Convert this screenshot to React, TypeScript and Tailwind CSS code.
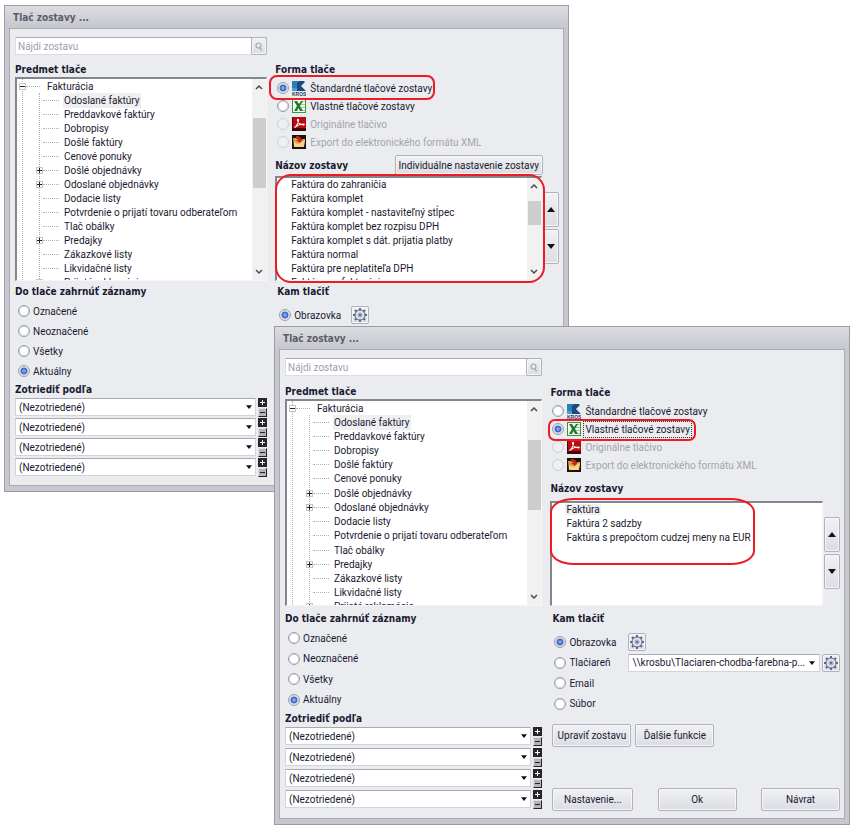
import React, { ReactNode } from 'react';
import clsx from 'clsx';

const TREE = [
  { label: 'Odoslané faktúry', active: true },
  { label: 'Preddavkové faktúry' },
  { label: 'Dobropisy' },
  { label: 'Došlé faktúry' },
  { label: 'Cenové ponuky' },
  { label: 'Došlé objednávky', expandable: true },
  { label: 'Odoslané objednávky', expandable: true },
  { label: 'Dodacie listy' },
  { label: 'Potvrdenie o prijatí tovaru odberateľom' },
  { label: 'Tlač obálky' },
  { label: 'Predajky', expandable: true },
  { label: 'Zákazkové listy' },
  { label: 'Likvidačné listy' },
  { label: 'Prijaté reklamácie', expandable: true },
];

const STANDARD_REPORTS = [
  'Faktúra do zahraničia',
  'Faktúra komplet',
  'Faktúra komplet - nastaviteľný stĺpec',
  'Faktúra komplet bez rozpisu DPH',
  'Faktúra komplet s dát. prijatia platby',
  'Faktúra normal',
  'Faktúra pre neplatiteľa DPH',
  'Faktúra prefakturácia',
];

const CUSTOM_REPORTS = ['Faktúra', 'Faktúra 2 sadzby', 'Faktúra s prepočtom cudzej meny na EUR'];

const RECORDS = ['Označené', 'Neoznačené', 'Všetky', 'Aktuálny'];

const BUTTON =
  'rounded-[2px] border border-[#b0b1bb] bg-linear-to-b from-[#f1f2f5] via-[#e6e7ec] to-[#dcdde4] shadow-[inset_0_0_0_1px_#f6f6f9]';

const SUNKEN = 'border border-t-2 border-l-2 border-[#f6f6f8] border-t-[#85868c] border-l-[#85868c] bg-white';

const SELECT = 'h-[18px] w-full appearance-none border border-[#d3d4db] border-t-[#a8a9b2] bg-white pl-[3px]';

const KrosIcon = () => (
  <svg width="14" height="15" viewBox="0 0 14 15" aria-hidden="true">
    <path d="M0 0h7L5 4v6H0z" fill="#2b7fb8" />
    <path d="M5 5 9 1h4L9 5l5 5H5z" fill="#1b4a80" />
    <path d="M7 0h6L5 6V2z" fill="#1b4a80" />
    <path d="M0 7h5v3H0z" fill="#4c9bcb" />
    <text x="0" y="15" fontSize="5" fontWeight="bold" fill="#2d3a63" fontFamily="Liberation Sans, sans-serif">
      KROS
    </text>
  </svg>
);

const ExcelIcon = () => (
  <svg width="14" height="14" viewBox="0 0 14 14" aria-hidden="true">
    <rect x=".5" y=".5" width="13" height="13" fill="#f3faf0" stroke="#3d9440" />
    <path d="M9 2.500h4M9 5.500h4M9 8.500h4M9 11.500h4" stroke="#9bcf93" />
    <path d="M2 2h3l2 3 2-3h2L8 7l3 5H8L6.500 9 5 12H2l3-5z" fill="#1d7a2c" />
  </svg>
);

const PdfIcon = () => (
  <svg width="14" height="14" viewBox="0 0 14 14" aria-hidden="true">
    <rect width="14" height="14" fill="#4a0508" />
    <rect x="1" width="13" height="11" fill="#b80c12" />
    <path d="M2.500 10.500c2-1 4-5 4-7.500 0-1-1-1-1 0 0 3 3 5 6 5 1 0 1-1 0-1-3 0-6 1-9 3.500z" fill="none" stroke="#fff" strokeWidth="1.100" />
  </svg>
);

const XmlIcon = () => (
  <svg width="14" height="14" viewBox="0 0 14 14" aria-hidden="true">
    <rect width="14" height="14" fill="#1c130c" />
    <path d="M1 3h3l1 1h8v2l-1 6H2z" fill="#e0a23f" />
    <path d="m2 7 4 2 7-4-1.500 7H2z" fill="#f8d489" />
    <path d="M4 1c3 0 5 1 5 3h2L8 8 4 5h2c0-1-1-2-2-2z" fill="#c9251d" />
  </svg>
);

const GearIcon = () => (
  <svg width="14" height="14" viewBox="0 0 14 14" fill="none" aria-hidden="true">
    <path d="M7 0v14M0 7h14M2 2l10 10M12 2 2 12" stroke="#5d6887" strokeWidth="2" />
    <circle cx="7" cy="7" r="5" fill="#dfe4ef" stroke="#5d6887" />
    <circle cx="7" cy="7" r="2" fill="#f4f6fa" stroke="#8d96ae" />
    <circle cx="7" cy="7" r="1" fill="#3e4763" />
  </svg>
);

const Chevron = ({ up }: { up?: boolean }) => (
  <svg width="8" height="6" viewBox="0 0 8 6" fill="none" stroke="#4a4a4a" strokeWidth="1.500" aria-hidden="true">
    <path d={up ? 'M1 5l3-3 3 3' : 'M1 1l3 3 3-3'} />
  </svg>
);

const Triangle = ({ up, small }: { up?: boolean; small?: boolean }) => (
  <svg width={small ? 6 : 8} height={small ? 4 : 5} viewBox="0 0 8 5" fill="#111" aria-hidden="true">
    <path d={up ? 'M0 5l4-5 4 5z' : 'M0 0h8L4 5z'} />
  </svg>
);

const FORMS = [
  { label: 'Štandardné tlačové zostavy', icon: <KrosIcon /> },
  { label: 'Vlastné tlačové zostavy', icon: <ExcelIcon /> },
  { label: 'Originálne tlačivo', icon: <PdfIcon />, disabled: true },
  { label: 'Export do elektronického formátu XML', icon: <XmlIcon />, disabled: true },
];

interface RadioProps {
  name: string;
  label: string;
  checked?: boolean;
  disabled?: boolean;
  focused?: boolean;
  icon?: ReactNode;
  className?: string;
}

const Radio = ({ name, label, checked, disabled, focused, icon, className }: RadioProps) => (
  <label className={clsx('flex items-center', disabled && 'text-[#a3a4ad]', className)}>
    <input
      type="radio"
      name={name}
      defaultChecked={checked}
      disabled={disabled}
      className="size-3 shrink-0 appearance-none rounded-full border border-[#9a9dab] bg-white shadow-[inset_0_0_0_1px_#d5d7df] checked:bg-[radial-gradient(circle,#9dbaf3_0,#3560c4_3px,#f4f5f8_4px)] disabled:border-[#cfd0d6] disabled:bg-[#eeeff2] disabled:shadow-none"
    />
    {icon && <span className="ml-[3px] w-[14px]">{icon}</span>}
    <span className={clsx(icon ? 'ml-[3px] px-px' : 'ml-[3px]', focused && 'outline-1 outline-dotted outline-[#333]')}>
      {label}
    </span>
  </label>
);

const Heading = ({ children, className }: { children: ReactNode; className?: string }) => (
  <h3 className={clsx("flex items-center font-['DejaVu_Sans_Condensed','DejaVu_Sans',sans-serif] font-bold text-[#1a1a30]", className)}>
    {children}
  </h3>
);

const Scrollbar = ({ thumb }: { thumb: string }) => (
  <div className="flex w-[14px] shrink-0 flex-col items-center bg-[#f1f1f1] py-[5px]">
    <Chevron up />
    <div className={clsx('w-[13px] bg-[#cdcdcd]', thumb)} />
    <div className="flex-1" />
    <Chevron />
  </div>
);

const Expander = ({ open }: { open?: boolean }) => (
  <svg width="7" height="7" viewBox="0 0 7 7" aria-hidden="true">
    <rect x=".5" y=".5" width="6" height="6" fill="#fff" stroke="#c4c4c4" />
    <path d={open ? 'M1 3.500h5' : 'M1 3.500h5M3.500 1v5'} stroke="#222" />
  </svg>
);

const Tree = ({ className, rows }: { className: string; rows: string }) => (
  <div className={clsx('flex overflow-hidden', SUNKEN, className)}>
    <div className="ml-[5px] min-w-0 flex-1 border-l border-dotted border-[#b0b0b0]">
      <div className="-ml-1 flex h-[14px] items-center">
        <Expander open />
        <span className="mr-[7px] w-[14px] border-t border-dotted border-[#b0b0b0]" />
        Fakturácia
      </div>
      <ul className={clsx('ml-4 grid auto-rows-fr border-l border-dotted border-[#b0b0b0]', rows)}>
        {TREE.map((item) => (
          <li key={item.label} className="-ml-1 flex items-center whitespace-nowrap">
            <span className="w-[7px]">{item.expandable && <Expander />}</span>
            <span className="mr-1 w-4 border-t border-dotted border-[#b0b0b0]" />
            <span className={clsx('px-px', item.active && 'bg-[#efeff0]')}>{item.label}</span>
          </li>
        ))}
      </ul>
    </div>
    <Scrollbar thumb="mt-[28px] h-[70px]" />
  </div>
);

const SortRow = ({ id }: { id: string }) => (
  <div className="flex h-[18px] items-center gap-[2px]">
    <div className="relative flex-1">
      <select id={id} aria-label="Zotriediť podľa" className={SELECT}>
        <option>(Nezotriedené)</option>
      </select>
      <span className="pointer-events-none absolute top-[7px] right-1">
        <Triangle small />
      </span>
    </div>
    <div className="flex flex-col gap-px">
      <button aria-label="Pridať" className="flex size-[9px] items-center justify-center bg-[#26262a]">
        <svg width="5" height="5" viewBox="0 0 5 5" stroke="#fff" aria-hidden="true">
          <path d="M0 2.500h5M2.500 0v5" />
        </svg>
      </button>
      <button
        aria-label="Odobrať"
        className="flex size-[9px] items-center justify-center border border-[#ddd] border-r-[#222] border-b-[#222] bg-[#b5b5b5]"
      >
        <span className="h-px w-[5px] bg-[#222]" />
      </button>
    </div>
  </div>
);

const GearButton = ({ label }: { label: string }) => (
  <button aria-label={label} className={clsx('flex size-[18px] shrink-0 items-center justify-center', BUTTON)}>
    <GearIcon />
  </button>
);

interface DialogProps {
  id: string;
  className: string;
  form: number;
  reports: string[];
  custom?: boolean;
  children: ReactNode;
}

const PrintDialog = ({ id, className, form, reports, custom, children }: DialogProps) => (
  <section className={clsx('flex flex-col border border-[#9b9ca4] bg-[#c6c7cf] px-1 pb-[5px]', className)}>
    <header className="-mx-1 flex h-[22px] items-center bg-linear-to-b from-[#dcdde1] to-[#c6c7cf] px-2">
      <h2 className="font-['DejaVu_Sans_Condensed','DejaVu_Sans',sans-serif] font-bold text-[#5b5c68]">Tlač zostavy ...</h2>
    </header>
    <div className="grid flex-1 auto-rows-min grid-cols-[8fr_9fr] gap-x-2 border border-[#a9aab3] bg-[#ebecf0] pt-2 pr-1 pl-[5px]">
      <div>
        <div className="flex h-[18px] border border-[#dcdde3] border-t-[#a8a9b2] bg-white">
          <input
            type="text"
            aria-label="Nájdi zostavu"
            placeholder="Nájdi zostavu"
            className="min-w-0 flex-1 pl-[2px] outline-none placeholder:text-[#a0a0a6]"
          />
          <button aria-label="Hľadať" className={clsx('-my-px -mr-px flex w-4 items-center justify-center', BUTTON)}>
            <svg width="8" height="9" viewBox="0 0 8 9" fill="none" stroke="#a9aab0" aria-hidden="true">
              <circle cx="3.500" cy="3.500" r="2.500" strokeWidth="1.200" />
              <path d="m5 5.500 1.500 3" strokeWidth="1.600" />
            </svg>
          </button>
        </div>
        <Heading className={clsx('h-[15px]', custom ? 'mt-2' : 'mt-[7px]')}>Predmet tlače</Heading>
        <Tree className={custom ? 'h-[207px]' : 'h-[204px]'} rows={custom ? 'h-[199px]' : 'h-[196px]'} />
      </div>

      <div className={clsx('flex flex-col', custom ? 'pt-[27px]' : 'pt-[25px]')}>
        <Heading className="h-[15px]">Forma tlače</Heading>
        <div className="mt-[2px] pl-[2px]">
          {FORMS.map((item, i) => (
            <Radio
              key={item.label}
              name={`${id}-form`}
              className="h-[18px]"
              checked={i === form}
              focused={custom && i === form}
              {...item}
            />
          ))}
        </div>
        <div className={clsx('mt-[3px] mr-4 flex h-[22px] items-center justify-between', custom && 'mb-[2px]')}>
          <Heading>Názov zostavy</Heading>
          {!custom && <button className={clsx('h-5 px-[3px]', BUTTON)}>Individuálne nastavenie zostavy</button>}
        </div>
        <div className="flex gap-px">
          <div className={clsx('flex h-[105px] flex-1 overflow-hidden', SUNKEN)}>
            <ul className="flex-1 pl-[13px]">
              {reports.map((name, i) => (
                <li key={name} className="h-[14px] leading-[14px] whitespace-nowrap">
                  <span className={clsx('px-px', custom && i === 0 && 'bg-[#efeff0]')}>{name}</span>
                </li>
              ))}
            </ul>
            {!custom && <Scrollbar thumb="mt-[12px] h-[24px]" />}
          </div>
          <div className="flex w-4 flex-col gap-[2px] pt-4">
            <button aria-label="Posunúť hore" className={clsx('flex h-[35px] items-center justify-center', BUTTON)}>
              <Triangle up />
            </button>
            <button aria-label="Posunúť dole" className={clsx('flex h-[35px] items-center justify-center', BUTTON)}>
              <Triangle />
            </button>
          </div>
        </div>
      </div>

      <div className={custom ? 'pt-[3px]' : 'pt-px'}>
        <Heading className="h-[19px]">Do tlače zahrnúť záznamy</Heading>
        <div className={clsx('grid auto-rows-fr pl-[3px]', custom ? 'h-[82px]' : 'h-20')}>
          {RECORDS.map((label) => (
            <Radio key={label} name={`${id}-records`} label={label} checked={label === 'Aktuálny'} />
          ))}
        </div>
        <Heading className="h-[17px]">Zotriediť podľa</Heading>
        <div className={clsx('flex flex-col', custom ? 'gap-[3px]' : 'gap-[2px]')}>
          {[1, 2, 3, 4].map((n) => (
            <SortRow key={n} id={`${id}-sort-${n}`} />
          ))}
        </div>
      </div>

      <div className={clsx('pl-[2px]', custom ? 'pt-[3px]' : 'pt-px')}>
        <Heading className="h-[19px]">Kam tlačiť</Heading>
        {children}
      </div>
    </div>
  </section>
);

export default function App() {
  return (
    <main className="relative h-screen min-h-[827px] overflow-hidden bg-white font-[Roboto,sans-serif] text-[10px] text-[#1a1a30]">
      <PrintDialog
        id="standard"
        className="absolute top-[5px] left-[4px] h-[487px] w-[565px]"
        form={0}
        reports={STANDARD_REPORTS}
      >
        <div className="mt-1 flex h-5 items-center pl-[2px]">
          <Radio name="standard-target" label="Obrazovka" className="w-[72px]" checked />
          <GearButton label="Nastavenie obrazovky" />
        </div>
      </PrintDialog>

      <PrintDialog
        id="custom"
        className="absolute top-[326px] left-[274px] h-[499px] w-[576px]"
        form={1}
        reports={CUSTOM_REPORTS}
        custom
      >
        <div className="mt-1 grid h-[82px] auto-rows-fr pl-[2px]">
          <div className="flex items-center">
            <Radio name="custom-target" label="Obrazovka" className="w-[74px]" checked />
            <GearButton label="Nastavenie obrazovky" />
          </div>
          <div className="flex items-center">
            <Radio name="custom-target" label="Tlačiareň" className="w-[74px] shrink-0" />
            <div className="relative mr-[2px] min-w-0 flex-1">
              <select aria-label="Tlačiareň" className={SELECT}>
                <option>\\krosbu\Tlaciaren-chodba-farebna-p...</option>
              </select>
              <span className="pointer-events-none absolute top-[7px] right-[5px]">
                <Triangle small />
              </span>
            </div>
            <GearButton label="Nastavenie tlačiarne" />
          </div>
          <Radio name="custom-target" label="Email" />
          <Radio name="custom-target" label="Súbor" />
        </div>
        <div className="mt-[10px] flex gap-1">
          <button className={clsx('h-[23px] w-[79px]', BUTTON)}>Upraviť zostavu</button>
          <button className={clsx('h-[23px] w-[79px]', BUTTON)}>Ďalšie funkcie</button>
        </div>
        <div className="mt-[41px] flex justify-between">
          <button className={clsx('h-[23px] w-[81px]', BUTTON)}>Nastavenie...</button>
          <button className={clsx('h-[23px] w-[79px]', BUTTON)}>Ok</button>
          <button className={clsx('h-[23px] w-[79px]', BUTTON)}>Návrat</button>
        </div>
      </PrintDialog>

      {/* red callouts drawn over the dialogs */}
      <div className="pointer-events-none absolute top-[75px] left-[269px] h-[25px] w-[166px] rounded-[8px] border-2 border-[#ed1c24]" />
      <div className="pointer-events-none absolute top-[174px] left-[275px] h-[109px] w-[270px] rounded-[16px] border-2 border-[#ed1c24]" />
      <div className="pointer-events-none absolute top-[419px] left-[548px] h-[22px] w-[148px] rounded-[7px] border-2 border-[#ed1c24]" />
      <div className="pointer-events-none absolute top-[498px] left-[550px] h-[67px] w-[205px] rounded-[24px/14px] border-2 border-[#ed1c24]" />
    </main>
  );
}
